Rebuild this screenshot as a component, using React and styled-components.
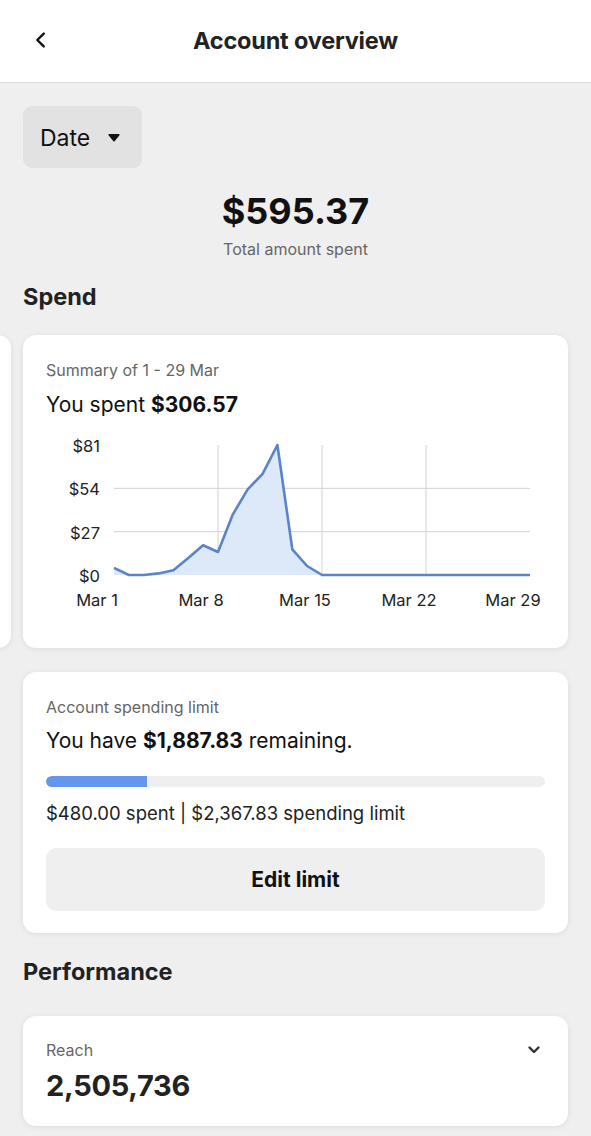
import React from "react";
import styled, { createGlobalStyle } from "styled-components";

const GlobalStyle = createGlobalStyle`
  html, body {
    margin: 0;
    padding: 0;
    background: #efefef;
    font-family: "Inter", "Noto Sans", sans-serif;
    color: #111;
  }
  * { box-sizing: border-box; }
`;

const data = [4.5, 0, 0, 1, 3, 10.5, 18.5, 14.3, 37.8, 53.4, 63, 81, 16, 5.6, 0,
  0, 0, 0, 0, 0, 0, 0, 0, 0, 0, 0, 0, 0, 0];

const App = () => {
  return (
    <Page>
      <GlobalStyle />
      <Header>
        <BackButton aria-label="Back">
          <svg width="22" height="22" viewBox="0 0 24 24" fill="none">
            <path d="M15 5l-7 7 7 7" stroke="#111" strokeWidth="2.6" strokeLinecap="round" strokeLinejoin="round" />
          </svg>
        </BackButton>
        <HeaderTitle>Account overview</HeaderTitle>
      </Header>

      <Body>
        <DateButton>
          Date
          <svg width="14" height="10" viewBox="0 0 14 10">
            <path d="M1.5 2.2 Q1 1 2.3 1 H11.7 Q13 1 12.5 2.2 L7.8 8 Q7 9 6.2 8 Z" fill="#111" />
          </svg>
        </DateButton>

        <Total>
          <TotalValue>$595.37</TotalValue>
          <TotalLabel>Total amount spent</TotalLabel>
        </Total>

        <SectionTitle $top={24}>Spend</SectionTitle>
      </Body>

      <Carousel>
        <Track>
          <Card $height={313} />
          <Card $height={313}>
            <CardLabel>Summary of 1 - 29 Mar</CardLabel>
            <CardHeadline>
              You spent <b>$306.57</b>
            </CardHeadline>
            <SpendChart />
          </Card>
        </Track>
      </Carousel>

      <Body>
        <Card>
          <CardLabel>Account spending limit</CardLabel>
          <CardHeadline $top={11}>
            You have <b>$1,887.83</b> remaining.
          </CardHeadline>
          <Progress>
            <ProgressFill style={{ width: `${(480 / 2367.83) * 100}%` }} />
          </Progress>
          <LimitText>$480.00 spent | $2,367.83 spending limit</LimitText>
          <EditButton>Edit limit</EditButton>
        </Card>

        <SectionTitle $top={25}>Performance</SectionTitle>

        <MetricCard>
          <MetricRow>
            <CardLabel>Reach</CardLabel>
            <svg width="14" height="10" viewBox="0 0 14 10">
              <path d="M2.5 2.5 L7 7 L11.5 2.5" stroke="#333" strokeWidth="2.4" fill="none" strokeLinecap="round" strokeLinejoin="round" />
            </svg>
          </MetricRow>
          <MetricValue>2,505,736</MetricValue>
        </MetricCard>
      </Body>
    </Page>
  );
};

const SpendChart = () => {
  const x0 = 68, x1 = 484, yTop = 14, yBase = 144;
  const sx = (i) => x0 + (i * (x1 - x0)) / 28;
  const sy = (v) => yBase - (v / 81) * (yBase - yTop);
  const pts = data.map((v, i) => `${sx(i).toFixed(1)},${sy(v).toFixed(1)}`);
  const line = `M${pts.join(" L")}`;
  const area = `${line} L${sx(28)},${yBase} L${x0},${yBase} Z`;
  const yTicks = [
    { v: 81, l: "$81" },
    { v: 54, l: "$54" },
    { v: 27, l: "$27" },
    { v: 0, l: "$0" },
  ];
  const xTicks = [
    { i: 0, l: "Mar 1" },
    { i: 7, l: "Mar 8" },
    { i: 14, l: "Mar 15" },
    { i: 21, l: "Mar 22" },
    { i: 28, l: "Mar 29" },
  ];
  return (
    <ChartSvg width="500" height="185" viewBox="0 0 500 185">
      {[54, 27].map((v) => (
        <line key={v} x1={x0} x2={x1} y1={sy(v)} y2={sy(v)} stroke="#d2d2d2" strokeWidth="1" />
      ))}
      {[7, 14, 21].map((i) => (
        <line key={i} x1={sx(i)} x2={sx(i)} y1={yTop} y2={yBase} stroke="#d2d2d2" strokeWidth="1" />
      ))}
      <path d={area} fill="#dde9f8" />
      <path d={line} fill="none" stroke="#5b84c8" strokeWidth="2.6" strokeLinejoin="round" />
      {yTicks.map((t) => (
        <text key={t.l} x="54" y={sy(t.v) + 7} textAnchor="end" fontSize="16.5" fill="#222" fontFamily="Inter, sans-serif">
          {t.l}
        </text>
      ))}
      {xTicks.map((t) => (
        <text key={t.l} x={sx(t.i) - 17} y="175" textAnchor="middle" fontSize="16.5" fill="#222" fontFamily="Inter, sans-serif">
          {t.l}
        </text>
      ))}
    </ChartSvg>
  );
};

export default App;

const Page = styled.div`
  min-height: 1136px;
  background: #efefef;
  overflow: hidden;
`;

const Header = styled.header`
  height: 83px;
  background: #fff;
  border-bottom: 1px solid #dcdcdc;
  display: flex;
  align-items: center;
  justify-content: center;
  position: relative;
`;

const BackButton = styled.button`
  position: absolute;
  left: 30px;
  top: 29px;
  border: none;
  background: none;
  padding: 0;
  display: flex;
`;

const HeaderTitle = styled.h1`
  margin: 0 0 2px;
  font-size: 23.5px;
  font-weight: 700;
  color: #222;
  letter-spacing: -0.2px;
`;

const Body = styled.div`
  padding: 0 23px;
  display: flex;
  flex-direction: column;
`;

const DateButton = styled.button`
  margin-top: 23px;
  align-self: flex-start;
  width: 119px;
  height: 62px;
  border: none;
  border-radius: 9px;
  background: #e2e2e2;
  display: flex;
  align-items: center;
  gap: 17px;
  padding: 2px 0 0 17px;
  font-family: "Inter", sans-serif;
  font-size: 23px;
  color: #111;
`;

const Total = styled.div`
  display: flex;
  flex-direction: column;
  align-items: center;
  margin-top: 18px;
`;

const TotalValue = styled.div`
  font-size: 36px;
  font-weight: 700;
  line-height: 50px;
  color: #111;
`;

const TotalLabel = styled.div`
  font-size: 16px;
  color: #666;
  margin-top: 3px;
  line-height: 20px;
`;

const SectionTitle = styled.h2`
  margin: ${(p) => p.$top}px 0 0;
  font-size: 23.5px;
  font-weight: 700;
  color: #222;
  line-height: 28px;
`;

const Carousel = styled.div`
  overflow: hidden;
  padding: 24px 0 24px;
  margin-bottom: 0;
`;

const Track = styled.div`
  display: flex;
  gap: 12px;
  transform: translateX(-534px);
  width: max-content;
`;

const Card = styled.div`
  width: 545px;
  flex: none;
  height: ${(p) => (p.$height ? `${p.$height}px` : "auto")};
  background: #fff;
  border-radius: 13px;
  box-shadow: 0 1px 6px rgba(0, 0, 0, 0.08);
  padding: 25px 23px 22px;
  display: flex;
  flex-direction: column;
`;

const CardLabel = styled.div`
  font-size: 16px;
  color: #666;
  line-height: 20px;
`;

const CardHeadline = styled.div`
  margin-top: ${(p) => p.$top || 12}px;
  font-size: 21px;
  line-height: 26px;
  color: #111;
  b { font-weight: 700; }
`;

const ChartSvg = styled.svg`
  margin-top: 13px;
  display: block;
`;

const Progress = styled.div`
  margin-top: 22px;
  height: 11px;
  border-radius: 6px;
  background: #efefef;
  overflow: hidden;
`;

const ProgressFill = styled.div`
  height: 100%;
  background: #6496ee;
  border-radius: 6px 0 0 6px;
`;

const LimitText = styled.div`
  margin-top: 14px;
  font-size: 18.5px;
  color: #222;
  line-height: 24px;
`;

const EditButton = styled.button`
  margin-top: 23px;
  height: 63px;
  border: none;
  border-radius: 10px;
  background: #efefef;
  font-family: "Inter", sans-serif;
  font-size: 21px;
  font-weight: 700;
  color: #111;
`;

const MetricCard = styled.div`
  margin-top: 30px;
  background: #fff;
  border-radius: 13px;
  box-shadow: 0 1px 6px rgba(0, 0, 0, 0.08);
  padding: 24px 23px 21px;
`;

const MetricRow = styled.div`
  display: flex;
  justify-content: space-between;
  align-items: center;
  padding-right: 4px;
`;

const MetricValue = styled.div`
  margin-top: 7px;
  font-size: 29px;
  font-weight: 700;
  color: #222;
  line-height: 38px;
  letter-spacing: -0.3px;
`;
